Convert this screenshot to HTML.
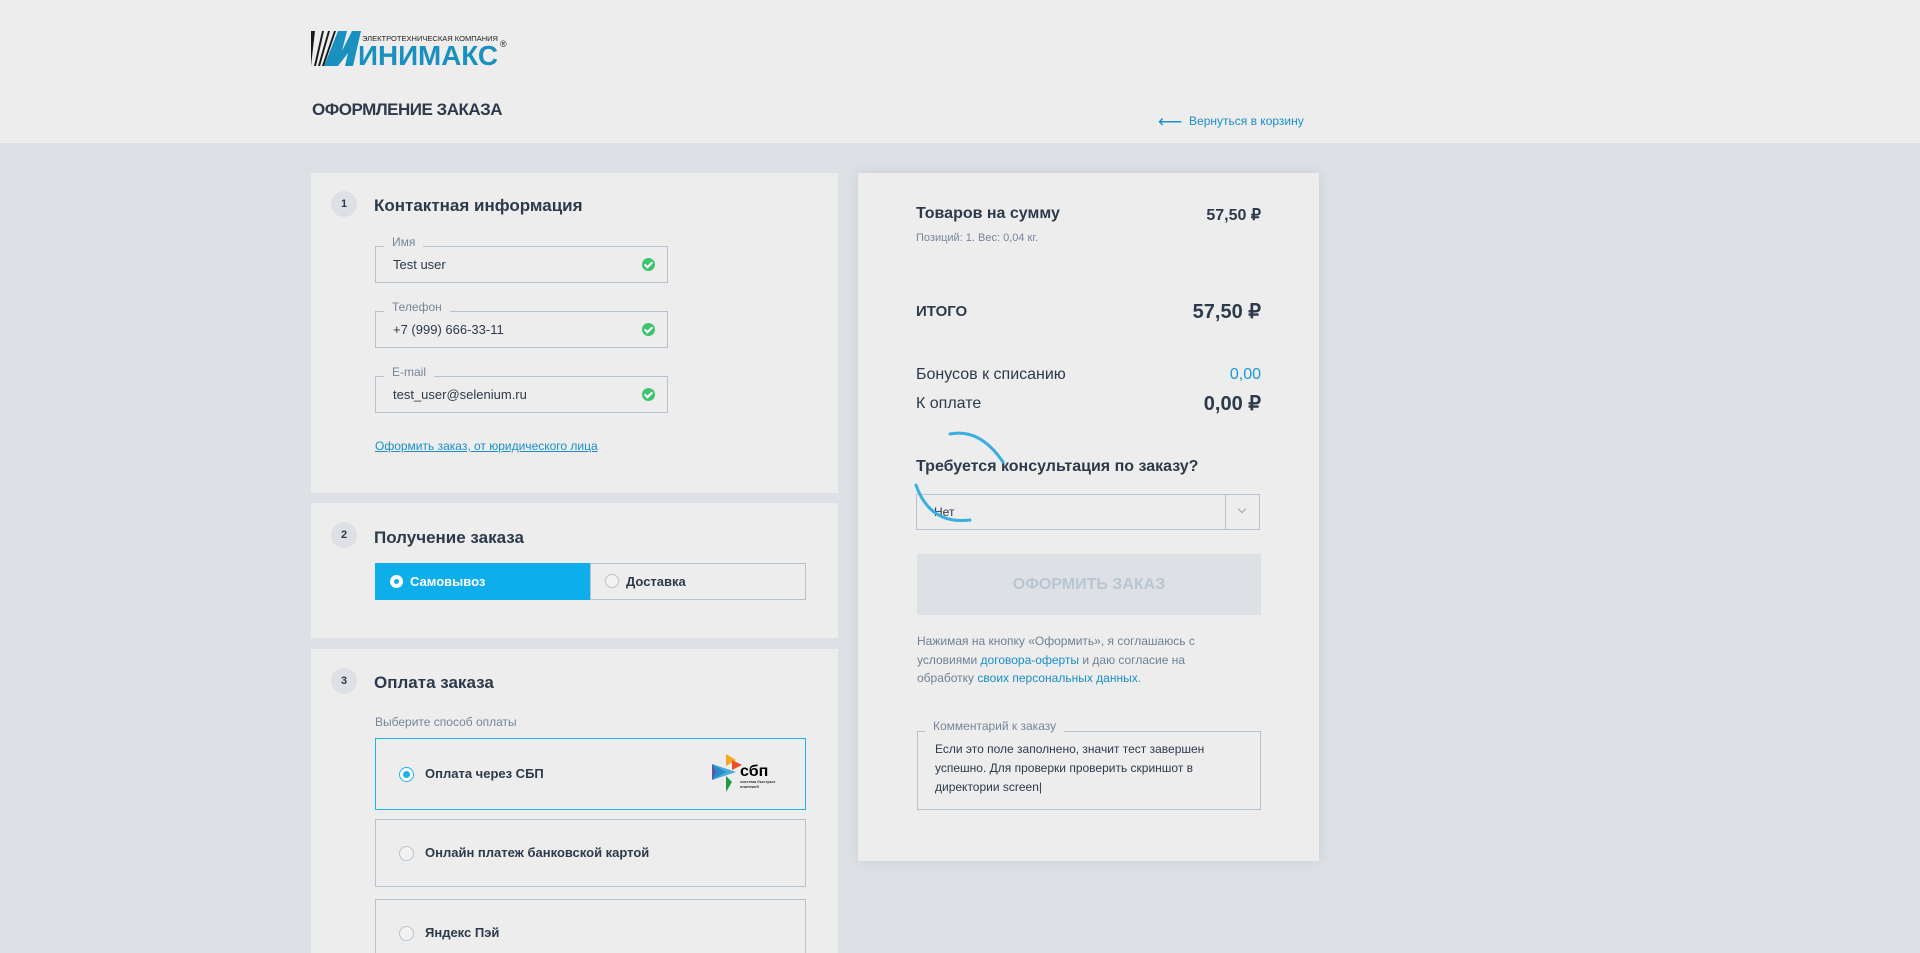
<!DOCTYPE html>
<html style="width:1920px;height:953px;overflow:hidden"><head><meta charset="utf-8"><style>
*{box-sizing:border-box;margin:0;padding:0}
body{width:1920px;height:953px;overflow:hidden;background:#dde1e5;font-family:"Liberation Sans",sans-serif;color:#2c3a4b;position:relative}
.abs{position:absolute}
.hdr{left:0;top:0;width:1920px;height:143px;background:#ededed}
.card{background:#ededed}
.num{width:26px;height:26px;border-radius:50%;background:#dde1e5;font-size:11px;font-weight:bold;text-align:center;line-height:26px;color:#2c3a4b}
.h{font-size:17px;font-weight:bold;color:#2c3a4b}
.inp{border:1px solid #b6c3cf;width:293px;height:37px;font-size:13px;padding-left:17px;line-height:35px}
.lbl{font-size:12px;color:#75869a;background:#ededed;padding:0 8px}
.chk{width:13px;height:13px;border-radius:50%;background:#3cc46e;right:12px;top:11px}
.chk:after{content:"";position:absolute;left:4px;top:2px;width:3px;height:6px;border:solid #fff;border-width:0 2px 2px 0;transform:rotate(45deg)}
.opt{border:1px solid #b6c3cf;width:431px;font-size:13px;font-weight:bold}
.radio{width:15px;height:15px;border-radius:50%;border:1px solid #b6c3cf;background:#f2f2f2}
.r{right:0;text-align:right}
</style></head><body>
<div class="abs hdr"></div>
<svg class="abs" style="left:311px;top:31px" width="210" height="37" viewBox="0 0 210 37">
<g fill="#1a1a1a"><polygon points="0,35 0,0 4,0"/><polygon points="3,35 11,0 13,0 5,35"/><polygon points="7,35 17,0 19,0 9,35"/><polygon points="11,35 23,0 25,0 13,35"/></g>
<polygon points="13,35 27,0 36,0 31,20 41,0 50,0 42,35 34,35 37,22 27,35" fill="#1a90c0"/>
<text x="47" y="34" font-family="Liberation Sans" font-weight="bold" font-size="28" fill="#1a90c0" textLength="140" lengthAdjust="spacingAndGlyphs">ИНИМАКС</text>
<text x="51" y="10" font-family="Liberation Sans" font-size="7.5" fill="#222" textLength="136" lengthAdjust="spacingAndGlyphs">ЭЛЕКТРОТЕХНИЧЕСКАЯ КОМПАНИЯ</text>
<text x="189" y="16" font-family="Liberation Sans" font-size="9" fill="#222">®</text>
</svg>
<div class="abs" style="left:312px;top:100px;font-size:17px;font-weight:bold;letter-spacing:-0.5px">ОФОРМЛЕНИЕ ЗАКАЗА</div>
<div class="abs" style="left:1158px;top:112px;font-size:12px;color:#1a8ec7"><span style="font-size:17px;vertical-align:-2px">⟵</span>&nbsp; Вернуться в корзину</div>

<div class="abs card" style="left:311px;top:173px;width:527px;height:320px">
 <div class="abs num" style="left:20px;top:18px">1</div>
 <div class="abs h" style="left:63px;top:23px">Контактная информация</div>
 <div class="abs inp" style="left:64px;top:73px">Test user<div class="abs chk"></div></div>
 <div class="abs lbl" style="left:73px;top:62px">Имя</div>
 <div class="abs inp" style="left:64px;top:138px">+7 (999) 666-33-11<div class="abs chk"></div></div>
 <div class="abs lbl" style="left:73px;top:127px">Телефон</div>
 <div class="abs inp" style="left:64px;top:203px">test_user@selenium.ru<div class="abs chk"></div></div>
 <div class="abs lbl" style="left:73px;top:192px">E-mail</div>
 <div class="abs" style="left:64px;top:266px;font-size:12px;color:#1a8ec7;text-decoration:underline">Оформить заказ, от юридического лица</div>
</div>

<div class="abs card" style="left:311px;top:503px;width:527px;height:135px">
 <div class="abs num" style="left:20px;top:19px">2</div>
 <div class="abs h" style="left:63px;top:25px">Получение заказа</div>
 <div class="abs" style="left:64px;top:60px;width:216px;height:37px;background:#0eaeea;color:#fff;font-size:13px;font-weight:bold;line-height:37px;padding-left:35px">Самовывоз
  <div class="abs" style="left:15px;top:12px;width:13px;height:13px;border-radius:50%;background:#fff"><div class="abs" style="left:4px;top:4px;width:5px;height:5px;border-radius:50%;background:#0eaeea"></div></div></div>
 <div class="abs" style="left:279px;top:60px;width:216px;height:37px;border:1px solid #b6c3cf;font-size:13px;font-weight:bold;line-height:35px;padding-left:35px">Доставка
  <div class="abs radio" style="left:14px;top:10px;width:14px;height:14px"></div></div>
</div>

<div class="abs card" style="left:311px;top:649px;width:527px;height:304px;overflow:hidden">
 <div class="abs num" style="left:20px;top:19px">3</div>
 <div class="abs h" style="left:63px;top:24px">Оплата заказа</div>
 <div class="abs" style="left:64px;top:66px;font-size:12px;color:#75869a">Выберите способ оплаты</div>
 <div class="abs opt" style="left:64px;top:89px;height:72px;border-color:#1cb3ec;line-height:70px;padding-left:49px">Оплата через СБП
  <div class="abs radio" style="left:23px;top:28px;border-color:#1cb3ec;background:#fff"><div class="abs" style="left:3px;top:3px;width:7px;height:7px;border-radius:50%;background:#1cb3ec"></div></div>
  <svg class="abs" style="left:336px;top:15px" width="78" height="40" viewBox="0 0 78 40">
   <polygon points="0,10 14,18 0,26" fill="#5b57a2"/><polygon points="14,0 24,6 14,12" fill="#f5a623"/><polygon points="20,6 30,11 20,16" fill="#e94f24"/><polygon points="14,22 20,28 14,38" fill="#1d9a47"/><polygon points="0,10 24,18 0,26 4,18" fill="#1a9ad6" opacity=".8"/>
   <text x="28" y="22" font-family="Liberation Sans" font-weight="bold" font-size="16" fill="#000">сбп</text>
   <text x="28" y="29" font-family="Liberation Sans" font-size="4" fill="#333">система быстрых</text>
   <text x="28" y="34" font-family="Liberation Sans" font-size="4" fill="#333">платежей</text>
  </svg></div>
 <div class="abs opt" style="left:64px;top:170px;height:68px;line-height:66px;padding-left:49px">Онлайн платеж банковской картой<div class="abs radio" style="left:23px;top:26px"></div></div>
 <div class="abs opt" style="left:64px;top:250px;height:80px;padding-left:49px;padding-top:25px">Яндекс Пэй<div class="abs radio" style="left:23px;top:26px"></div></div>
</div>

<div class="abs card" style="left:858px;top:173px;width:461px;height:688px;box-shadow:0 0 10px rgba(150,170,190,.35)">
 <div class="abs" style="left:58px;top:32px;font-size:16px;font-weight:bold">Товаров на сумму</div>
 <div class="abs r" style="right:58px;top:32px;font-size:16px;font-weight:bold">57,50 ₽</div>
 <div class="abs" style="left:58px;top:59px;font-size:11px;color:#75869a">Позиций: 1. Вес: 0,04 кг.</div>
 <div class="abs" style="left:58px;top:130px;font-size:15px;font-weight:bold">ИТОГО</div>
 <div class="abs r" style="right:58px;top:126px;font-size:20px;font-weight:bold">57,50 ₽</div>
 <div class="abs" style="left:58px;top:193px;font-size:16px">Бонусов к списанию</div>
 <div class="abs r" style="right:58px;top:193px;font-size:16px;color:#1a9ad6">0,00</div>
 <div class="abs" style="left:58px;top:222px;font-size:16px">К оплате</div>
 <div class="abs r" style="right:58px;top:218px;font-size:20px;font-weight:bold">0,00 ₽</div>
 <div class="abs" style="left:58px;top:285px;font-size:16px;font-weight:bold">Требуется консультация по заказу?</div>
 <div class="abs" style="left:58px;top:321px;width:344px;height:36px;border:1px solid #b6c3cf;font-size:12px;line-height:34px;padding-left:17px">Нет
  <div class="abs" style="left:308px;top:0;width:1px;height:34px;background:#b6c3cf"></div>
  <div class="abs" style="left:322px;top:11px;width:6px;height:6px;border:solid #99a8b6;border-width:0 1px 1px 0;transform:rotate(45deg)"></div></div>
 <div class="abs" style="left:59px;top:381px;width:344px;height:61px;background:#dde1e5;color:#b8c6d2;font-size:16px;font-weight:bold;text-align:center;line-height:61px">ОФОРМИТЬ ЗАКАЗ</div>
 <div class="abs" style="left:59px;top:459px;width:300px;font-size:12px;line-height:18.5px;color:#6f8194">Нажимая на кнопку «Оформить», я соглашаюсь с условиями <span style="color:#1a8ec7">договора-оферты</span> и даю согласие на обработку <span style="color:#1a8ec7">своих персональных данных</span>.</div>
 <div class="abs" style="left:59px;top:558px;width:344px;height:79px;border:1px solid #b6c3cf;padding:8px 17px;font-size:12px;line-height:19px">Если это поле заполнено, значит тест завершен успешно. Для проверки проверить скриншот в директории screen|</div>
 <div class="abs lbl" style="left:67px;top:546px">Комментарий к заказу</div>
</div>
<svg class="abs" style="left:900px;top:425px" width="120" height="110"><path d="M50 9 Q80 3 103 37" fill="none" stroke="#3aaee0" stroke-width="3" stroke-linecap="round"/><path d="M16 60 Q30 100 70 95" fill="none" stroke="#3aaee0" stroke-width="3" stroke-linecap="round"/></svg>
</body></html>
